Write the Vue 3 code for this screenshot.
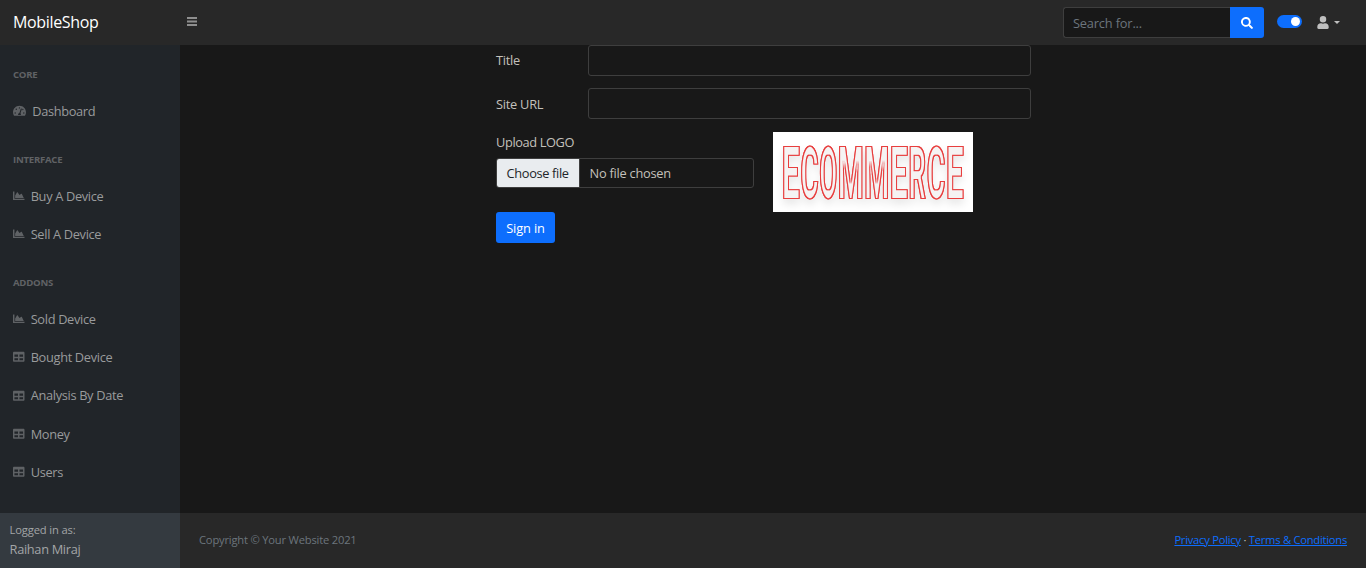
<script setup>
const groups = [
  { title: 'Core', items: [{ label: 'Dashboard', icon: 'gauge' }] },
  {
    title: 'Interface',
    items: [
      { label: 'Buy A Device', icon: 'area' },
      { label: 'Sell A Device', icon: 'area' },
    ],
  },
  {
    title: 'Addons',
    items: [
      { label: 'Sold Device', icon: 'area' },
      { label: 'Bought Device', icon: 'table' },
      { label: 'Analysis By Date', icon: 'table' },
      { label: 'Money', icon: 'table' },
      { label: 'Users', icon: 'table' },
    ],
  },
]

const icons = {
  gauge: {
    box: '0 0 576 512',
    d: 'M288 32C129 32 0 161 0 320c0 53 14 102 39 145 6 9 16 15 27 15h444c11 0 21-6 27-15 25-43 39-92 39-145C576 161 447 32 288 32zm0 64c15 0 27 10 31 23-1 3-3 5-4 8l-9 28c-5 3-11 5-18 5a32 32 0 010-64zM96 384a32 32 0 110-64 32 32 0 010 64zm48-160a32 32 0 110-64 32 32 0 010 64zm247-40l-61 184c13 11 22 28 22 48 0 12-3 23-9 32H233c-6-9-9-20-9-32 0-34 27-62 60-64l61-184a24 24 0 0146 16zm15 31l15-46c3-1 7-1 11-1a32 32 0 11-26 47zm74 169a32 32 0 110-64 32 32 0 010 64z',
  },
  area: {
    box: '0 0 512 512',
    d: 'M500 384c7 0 12 5 12 12v40c0 7-5 12-12 12H12c-7 0-12-5-12-12V76c0-7 5-12 12-12h40c7 0 12 5 12 12v308h436zM373 165l-85 59-86-124c-5-7-17-6-21 2L96 240v112h384l-90-181c-3-7-11-9-17-6z',
  },
  table: {
    box: '0 0 512 512',
    d: 'M464 32H48C22 32 0 54 0 80v352c0 26 22 48 48 48h416c27 0 48-22 48-48V80c0-26-21-48-48-48zM224 416H64v-96h160v96zm0-160H64v-96h160v96zm224 160H288v-96h160v96zm0-160H288v-96h160v96z',
  },
}

// Left edge of each logo letter's cell; the last value closes the word.
const stops = [8.6, 27.2, 46, 64.5, 91, 116.5, 135.2, 153.5, 172.7, 191]
const logo = [...'ECOMMERCE'].map((ch, n) => ({ ch, x: stops[n], w: stops[n + 1] - stops[n] }))
</script>

<template>
  <div class="page">
    <header class="topbar">
      <a class="brand">MobileShop</a>
      <button class="toggle" aria-label="Menu">
        <svg viewBox="0 0 10 9"><path d="M0 0h10v2H0zM0 3.5h10v2H0zM0 7h10v2H0z" /></svg>
      </button>
      <div class="search">
        <span class="query">Search for...</span>
        <span class="go">
          <svg viewBox="0 0 512 512"><path d="M505 443l-100-100c-4-4-10-7-17-7h-16a208 208 0 10-36 36v16c0 7 3 13 7 17l100 100c9 9 24 9 34 0l28-28c9-10 9-25 0-34zM208 336a128 128 0 110-256 128 128 0 010 256z" /></svg>
        </span>
      </div>
      <span class="switch"><i></i></span>
      <span class="user">
        <svg viewBox="0 0 448 512"><path d="M224 256a128 128 0 100-256 128 128 0 000 256zm90 32h-17a174 174 0 01-146 0h-17C60 288 0 348 0 422v42c0 26 22 48 48 48h352c26 0 48-22 48-48v-42c0-74-60-134-134-134z" /></svg>
        <i class="caret"></i>
      </span>
    </header>

    <div class="body">
      <aside class="side">
        <nav>
          <template v-for="g in groups" :key="g.title">
            <div class="heading">{{ g.title }}</div>
            <a v-for="i in g.items" :key="i.label" class="link">
              <svg :class="i.icon" :viewBox="icons[i.icon].box"><path :d="icons[i.icon].d" /></svg>
              <span>{{ i.label }}</span>
            </a>
          </template>
        </nav>
        <div class="logged">
          <div class="small">Logged in as:</div>
          <div>Raihan Miraj</div>
        </div>
      </aside>

      <div class="content">
        <main>
          <form class="form">
            <div class="row">
              <label>Title</label>
              <div class="input"></div>
            </div>
            <div class="row url">
              <label>Site URL</label>
              <div class="input"></div>
            </div>
            <div class="upload">
              <div class="picker">
                <label>Upload LOGO</label>
                <div class="file">
                  <span class="choose">Choose file</span>
                  <span class="none">No file chosen</span>
                </div>
              </div>
              <svg class="logo" viewBox="0 0 200 80">
                <defs>
                  <filter id="outline" filterUnits="userSpaceOnUse" x="0" y="0" width="200" height="80" color-interpolation-filters="sRGB">
                    <feMorphology in="SourceAlpha" operator="erode" radius="1" result="core" />
                    <feFlood flood-color="#f5f3f3" />
                    <feComposite in2="core" operator="in" result="face" />
                    <feGaussianBlur in="SourceAlpha" stdDeviation="4" />
                    <feOffset dy="5" />
                    <feComponentTransfer result="shade"><feFuncA type="linear" slope=".1" /></feComponentTransfer>
                    <feMerge result="flat">
                      <feMergeNode in="SourceGraphic" />
                      <feMergeNode in="face" />
                    </feMerge>
                    <feGaussianBlur in="flat" stdDeviation=".5" result="soft" />
                    <feMerge>
                      <feMergeNode in="shade" />
                      <feMergeNode in="soft" />
                      <feMergeNode in="soft" />
                    </feMerge>
                  </filter>
                </defs>
                <rect width="200" height="80" fill="#fff" />
                <g filter="url(#outline)">
                  <text
                    v-for="(l, n) in logo"
                    :key="n"
                    :x="l.x"
                    y="67"
                    :textLength="l.w"
                    lengthAdjust="spacingAndGlyphs"
                  >{{ l.ch }}</text>
                </g>
              </svg>
            </div>
            <button type="button" class="submit">Sign in</button>
          </form>
        </main>
        <footer>
          <span class="copy">Copyright © Your Website 2021</span>
          <span class="links"><a>Privacy Policy</a> · <a>Terms &amp; Conditions</a></span>
        </footer>
      </div>
    </div>
  </div>
</template>

<style>
body {
  background: #181818;
}
</style>

<style scoped>
* {
  box-sizing: border-box;
}
.page {
  height: 568px;
  display: flex;
  flex-direction: column;
  overflow: hidden;
  font: 12.8px/19.2px "Open Sans", "Noto Sans", sans-serif;
  letter-spacing: -0.25px;
  color: #c4c1bc;
  background: #181818;
}
.topbar {
  height: 45px;
  flex: none;
  display: flex;
  align-items: center;
  background: #282828;
}
.brand {
  width: 180px;
  padding-left: 13px;
  font-size: 16px;
  letter-spacing: -0.35px;
  color: #fff;
}
.toggle {
  border: 0;
  background: none;
  padding: 0;
  margin: 0 auto 2px 7px;
  display: flex;
}
.toggle svg {
  width: 10px;
  height: 9px;
  fill: #8f8f8f;
}
.search {
  display: flex;
  width: 201px;
  height: 31px;
}
.query {
  flex: 1;
  border: 1px solid #3e3e3e;
  border-right: 0;
  border-radius: 3px 0 0 3px;
  background: #181818;
  color: #6c757d;
  padding: 6px 9px;
  letter-spacing: -0.17px;
}
.go {
  width: 34px;
  display: grid;
  place-items: center;
  background: #0d6efd;
  border-radius: 0 3px 3px 0;
}
.go svg {
  width: 12px;
  height: 12px;
  fill: #fff;
}
.switch {
  width: 25px;
  height: 13px;
  margin: 0 15px 2px 13px;
  padding: 2px;
  border-radius: 7px;
  background: #0d6efd;
  display: flex;
  justify-content: flex-end;
}
.switch i {
  width: 9px;
  height: 9px;
  border-radius: 50%;
  background: #fff;
}
.user {
  display: flex;
  align-items: center;
  width: 49px;
}
.user svg {
  width: 12px;
  height: 13px;
  fill: #bfbfbf;
}
.caret {
  margin-left: 5px;
  border: 3.4px solid transparent;
  border-top-color: #bfbfbf;
  border-bottom: 0;
}
.body {
  flex: 1;
  display: flex;
  min-height: 0;
}
.side {
  width: 180px;
  display: flex;
  flex-direction: column;
  background: #212529;
  color: #999b9c;
}
nav {
  flex: 1;
  padding-top: 1px;
  letter-spacing: -0.33px;
}
.heading {
  padding: 22.4px 13px 9.6px;
  font-size: 9.6px;
  line-height: 14.4px;
  font-weight: 700;
  letter-spacing: -0.25px;
  text-transform: uppercase;
  color: #606265;
}
.link {
  height: 38.3px;
  padding-left: 13px;
  display: flex;
  align-items: center;
}
.link svg {
  flex: none;
  width: 11.5px;
  height: 11.5px;
  margin: 0 6.2px 1px 0;
  fill: #5f6265;
}
.link svg.gauge {
  width: 13px;
}
.logged {
  height: 55px;
  padding: 7px 9.6px;
  background: #343a40;
  color: #a3a5a7;
  letter-spacing: -0.33px;
}
.small {
  font-size: 11.2px;
  line-height: 20px;
  letter-spacing: -0.15px;
}
.content {
  flex: 1;
  display: flex;
  flex-direction: column;
}
main {
  flex: 1;
  display: flex;
  padding-left: 316px;
}
.form {
  width: 535px;
}
.row {
  display: flex;
  height: 31px;
  margin-bottom: 12px;
}
.row label {
  width: 92px;
  padding-top: 6px;
}
.row.url label {
  padding-top: 7px;
}
.input {
  flex: 1;
  border: 1px solid #3e3e3e;
  border-radius: 3px;
}
.upload {
  display: flex;
  gap: 19px;
  height: 80px;
  margin-top: 13px;
}
.picker {
  width: 258px;
}
.picker label {
  display: block;
  margin: 1px 0 6px;
  letter-spacing: -0.38px;
}
.file {
  display: flex;
  height: 30px;
  border: 1px solid #3e3e3e;
  border-radius: 3px;
  overflow: hidden;
}
.file span {
  padding: 5px 9.6px;
}
.file .choose {
  width: 83px;
  padding-right: 0;
  letter-spacing: -0.35px;
  background: #e9ecef;
  color: #212529;
  border-right: 1px solid #3e3e3e;
}
.logo {
  width: 200px;
  height: 80px;
  overflow: visible;
}
.logo text {
  font: 900 74px Roboto, sans-serif;
  letter-spacing: 0;
  fill: #e83e3e;
}
.submit {
  display: block;
  width: 59px;
  height: 31px;
  border: 0;
  border-radius: 3px;
  padding: 2px 0 0;
  background: #0d6efd;
  color: #fff;
  font: inherit;
  letter-spacing: -0.1px;
}
footer {
  height: 55px;
  padding: 0 19px 2px;
  display: flex;
  align-items: center;
  justify-content: space-between;
  background: #282828;
  font-size: 11.2px;
  letter-spacing: -0.2px;
}
.copy {
  color: #6c757d;
}
.links {
  letter-spacing: -0.25px;
}
.links a {
  color: #0d6efd;
  text-decoration: underline;
}
</style>
